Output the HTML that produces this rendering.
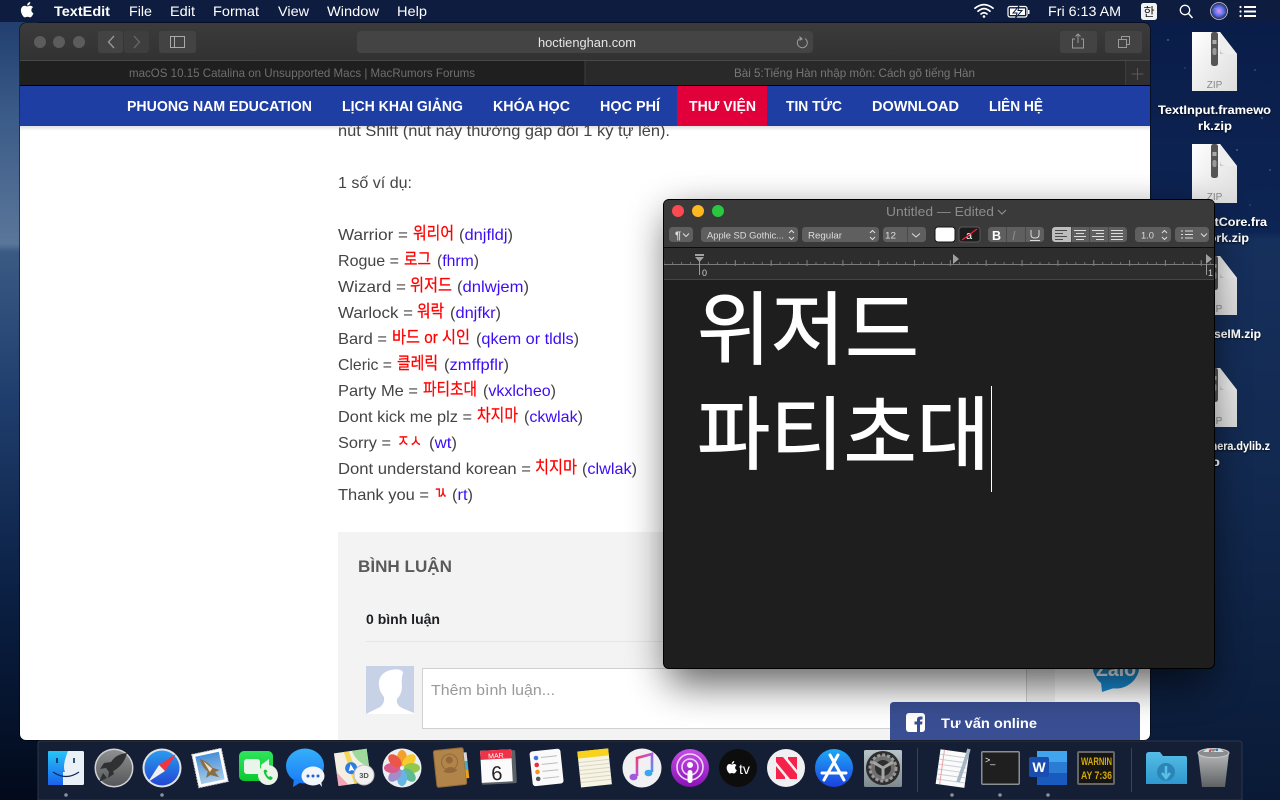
<!DOCTYPE html>
<html><head><meta charset="utf-8"><title>hoctienghan.com</title>
<style>
html,body{margin:0;padding:0;background:#0b1a35;width:1280px;height:800px;overflow:hidden}
svg{display:block}
text{font-family:"Liberation Sans","Noto Sans CJK KR",sans-serif}
.kr{font-family:"Liberation Sans","Noto Sans CJK KR",sans-serif}
.t{font-size:16px;fill:#444}
.r{font-size:17px;fill:#f00;stroke:#f00;stroke-width:.25px}
.b{font-size:16px;fill:#3d0cf5}
.d{fill:#444}
.n{font-size:15px;font-weight:bold;fill:#fff}
.m{font-size:14px;fill:#fff}
.f{font-size:12px;font-weight:bold;fill:#fff}
.tb{fill:#5f5f5f}
</style></head><body>
<svg width="1280" height="800" viewBox="0 0 1280 800" xmlns="http://www.w3.org/2000/svg">
<defs>
<linearGradient id="lf" x1="0" y1="0" x2="0" y2="1"><stop offset="0" stop-color="#1c3868"/><stop offset=".14" stop-color="#3a5a88"/><stop offset=".305" stop-color="#5a7699"/><stop offset=".315" stop-color="#3a5a84"/><stop offset=".5" stop-color="#1f3d6c"/><stop offset=".75" stop-color="#0a1f42"/><stop offset="1" stop-color="#020a1b"/></linearGradient>
<linearGradient id="rt" x1="0" y1="0" x2="0" y2="1"><stop offset="0" stop-color="#0a1c48"/><stop offset=".29" stop-color="#0d2554"/><stop offset=".3" stop-color="#16305d"/><stop offset=".6" stop-color="#12294f"/><stop offset="1" stop-color="#0a1a36"/></linearGradient>
<linearGradient id="tb" x1="0" y1="0" x2="0" y2="1"><stop offset="0" stop-color="#3b3b3b"/><stop offset="1" stop-color="#323232"/></linearGradient>
<linearGradient id="nsh" x1="0" y1="0" x2="0" y2="1"><stop offset="0" stop-color="#000" stop-opacity=".12"/><stop offset="1" stop-color="#000" stop-opacity="0"/></linearGradient>
<filter id="sh" x="-20%" y="-20%" width="140%" height="140%"><feGaussianBlur stdDeviation="20"/></filter>
<filter id="ts" x="-10%" y="-30%" width="120%" height="160%"><feDropShadow dx="0" dy="1" stdDeviation="1" flood-color="#000" flood-opacity=".8"/></filter>
<clipPath id="saf"><rect x="20" y="23" width="1130" height="717" rx="6"/></clipPath>
<linearGradient id="zipg" x1="0" y1="0" x2="1" y2="1"><stop offset="0" stop-color="#fff"/><stop offset="1" stop-color="#dcdcdc"/></linearGradient>
<linearGradient id="fin" x1="0" y1="0" x2="0" y2="1"><stop offset="0" stop-color="#26c6f6"/><stop offset="1" stop-color="#1a62ee"/></linearGradient>
<linearGradient id="gry" x1="0" y1="0" x2="0" y2="1"><stop offset="0" stop-color="#8d8f90"/><stop offset="1" stop-color="#55585a"/></linearGradient>
<linearGradient id="saf2" x1="0" y1="0" x2="0" y2="1"><stop offset="0" stop-color="#2a9bee"/><stop offset="1" stop-color="#2347d4"/></linearGradient>
<linearGradient id="ft" x1="0" y1="0" x2="0" y2="1"><stop offset="0" stop-color="#2fe45d"/><stop offset="1" stop-color="#0bc92f"/></linearGradient>
<linearGradient id="msg" x1="0" y1="0" x2="0" y2="1"><stop offset="0" stop-color="#35b0fb"/><stop offset="1" stop-color="#1b7df5"/></linearGradient>
<linearGradient id="mus" x1="0" y1="0" x2="1" y2="1"><stop offset="0" stop-color="#fb3a5c"/><stop offset=".5" stop-color="#b05ae0"/><stop offset="1" stop-color="#3aa6f0"/></linearGradient>
<linearGradient id="pod" x1="0" y1="0" x2="0" y2="1"><stop offset="0" stop-color="#c54ee6"/><stop offset="1" stop-color="#8a12b8"/></linearGradient>
<linearGradient id="aps" x1="0" y1="0" x2="0" y2="1"><stop offset="0" stop-color="#1fa8f6"/><stop offset="1" stop-color="#1b40e0"/></linearGradient>
<linearGradient id="dl" x1="0" y1="0" x2="0" y2="1"><stop offset="0" stop-color="#55bde6"/><stop offset="1" stop-color="#2f98cf"/></linearGradient>
<linearGradient id="tr" x1="0" y1="0" x2="0" y2="1"><stop offset="0" stop-color="#b5b7b8"/><stop offset="1" stop-color="#5e6163"/></linearGradient>
<linearGradient id="sp" x1="0" y1="0" x2="0" y2="1"><stop offset="0" stop-color="#b9c4cb"/><stop offset="1" stop-color="#7e8a90"/></linearGradient>
<linearGradient id="sky" x1="0" y1="0" x2="0" y2="1"><stop offset="0" stop-color="#4a8fd8"/><stop offset="1" stop-color="#a9cdea"/></linearGradient>
<radialGradient id="siri" cx=".5" cy=".5" r=".5"><stop offset="0" stop-color="#e8f"/><stop offset=".5" stop-color="#5a78f0"/><stop offset="1" stop-color="#2a2250"/></radialGradient>
<pattern id="tick" x="699" y="262" width="8.96" height="5" patternUnits="userSpaceOnUse"><rect width="1" height="3" fill="#6f6f6f"/></pattern>
<pattern id="tick2" x="699" y="260" width="35.84" height="8" patternUnits="userSpaceOnUse"><rect width="1" height="6" fill="#7d7d7d"/></pattern>
<g id="zip">
<path d="M0 0H28L45 22V59H0Z" fill="url(#zipg)"/><path d="M28 0V22H45Z" fill="#c9c9c9"/><path d="M28 0L45 22H34Q28 22 28 16Z" fill="#eee"/>
<rect x="19" y="0" width="7" height="34" rx="2.500" fill="#555"/><rect x="20.500" y="8" width="4" height="4" fill="#aaa"/><rect x="20.500" y="16" width="4" height="7" rx="2" fill="#999"/>
<text x="22.500" y="56" font-size="10" text-anchor="middle" fill="#888">ZIP</text>
</g>
</defs>

<!-- desktop -->
<rect width="1280" height="800" fill="url(#rt)"/>
<rect width="38" height="800" fill="url(#lf)"/>
<g fill="#fff" opacity=".5"><circle cx="1168" cy="40" r=".7"/><circle cx="1262" cy="118" r=".7"/><circle cx="1237" cy="150" r=".7"/><circle cx="1270" cy="170" r=".6"/><circle cx="1255" cy="70" r=".6"/><circle cx="1185" cy="68" r=".5"/><circle cx="1250" cy="205" r=".5"/></g>
<rect y="0" width="1280" height="22" fill="#0d1c3f"/>

<!-- desktop files -->
<use href="#zip" x="1192" y="32"/><use href="#zip" x="1192" y="144"/><use href="#zip" x="1192" y="256"/><use href="#zip" x="1192" y="368"/>
<g filter="url(#ts)">
<text class="f" x="1158" y="114" textLength="113" lengthAdjust="spacingAndGlyphs">TextInput.framewo</text>
<text class="f" x="1198" y="130" textLength="34" lengthAdjust="spacingAndGlyphs">rk.zip</text>
<text class="f" x="1163" y="226" textLength="104" lengthAdjust="spacingAndGlyphs">TextInputCore.fra</text>
<text class="f" x="1181" y="242" textLength="68" lengthAdjust="spacingAndGlyphs">mework.zip</text>
<text class="f" x="1169" y="338" textLength="92" lengthAdjust="spacingAndGlyphs">InputBaseIM.zip</text>
<text class="f" x="1159" y="450" textLength="111" lengthAdjust="spacingAndGlyphs">libRawCamera.dylib.z</text>
<text class="f" x="1207" y="466" textLength="13" lengthAdjust="spacingAndGlyphs">ip</text>
</g>

<!-- menu bar -->
<path fill="#fff" transform="translate(19.500,2) scale(.64)" d="M12.152 6.896c-.948 0-2.415-1.078-3.96-1.04-2.04.027-3.91 1.183-4.961 3.014-2.117 3.675-.546 9.103 1.519 12.09 1.013 1.454 2.208 3.09 3.792 3.039 1.52-.065 2.09-.987 3.935-.987 1.831 0 2.35.987 3.96.948 1.637-.026 2.676-1.48 3.676-2.948 1.156-1.688 1.636-3.325 1.662-3.415-.039-.013-3.182-1.221-3.22-4.857-.026-3.04 2.48-4.494 2.597-4.559-1.429-2.09-3.623-2.324-4.39-2.376-2-.156-3.675 1.09-4.61 1.09zM15.53 3.83c.843-1.012 1.4-2.427 1.245-3.83-1.207.052-2.662.805-3.532 1.818-.78.896-1.454 2.338-1.273 3.714 1.338.104 2.715-.688 3.559-1.701"/>
<text class="m" x="54" y="16" font-weight="bold" textLength="56" lengthAdjust="spacingAndGlyphs">TextEdit</text>
<text class="m" x="129" y="16" textLength="23" lengthAdjust="spacingAndGlyphs">File</text>
<text class="m" x="170" y="16" textLength="25" lengthAdjust="spacingAndGlyphs">Edit</text>
<text class="m" x="213" y="16" textLength="46" lengthAdjust="spacingAndGlyphs">Format</text>
<text class="m" x="278" y="16" textLength="31" lengthAdjust="spacingAndGlyphs">View</text>
<text class="m" x="327" y="16" textLength="52" lengthAdjust="spacingAndGlyphs">Window</text>
<text class="m" x="397" y="16" textLength="30" lengthAdjust="spacingAndGlyphs">Help</text>
<g fill="none" stroke="#fff" stroke-width="1.700" stroke-linecap="round"><path d="M975 8.200Q984 1 993 8.200"/><path d="M978 11.200Q984 6 990 11.200"/><path d="M981 14Q984 11.500 987 14"/></g><circle cx="984" cy="16.500" r="1.300" fill="#fff"/>
<rect x="1008" y="6.500" width="19" height="10.500" rx="2" fill="none" stroke="#fff" stroke-width="1.200"/><rect x="1028" y="10" width="1.500" height="4" fill="#fff"/><rect x="1010" y="8.500" width="15" height="6.500" fill="#fff"/><path d="M1019 6L1013 13H1017L1015.500 18L1022 10.500H1018Z" fill="#fff" stroke="#0d1c3f" stroke-width="1"/>
<text class="m" x="1048" y="16" textLength="73" lengthAdjust="spacingAndGlyphs">Fri 6:13 AM</text>
<rect x="1141" y="3" width="16" height="17" rx="2.500" fill="#f2f2f2"/><text x="1149" y="16" font-size="12" fill="#111" text-anchor="middle" class="kr">한</text>
<circle cx="1185" cy="10" r="4.700" fill="none" stroke="#fff" stroke-width="1.300"/><path d="M1188.500 13.500L1192.500 18" stroke="#fff" stroke-width="1.500"/>
<circle cx="1219" cy="11" r="8.500" fill="url(#siri)" stroke="#ccc" stroke-width=".8"/><path d="M1212 11Q1215 6 1219 11T1226 11Q1222 16 1219 11T1212 11" fill="#fff" opacity=".75"/>
<g fill="#fff"><circle cx="1240.500" cy="7" r="1.100"/><circle cx="1240.500" cy="11.500" r="1.100"/><circle cx="1240.500" cy="16" r="1.100"/><rect x="1244" y="6" width="12" height="2"/><rect x="1244" y="10.500" width="12" height="2"/><rect x="1244" y="15" width="12" height="2"/></g>

<!-- Safari -->
<rect x="19.500" y="22.500" width="1131" height="718" rx="6.500" fill="#000"/>
<g clip-path="url(#saf)">
<rect x="20" y="23" width="1130" height="37" fill="url(#tb)"/>
<rect x="20" y="60" width="1130" height="1" fill="#484848"/>
<rect x="20" y="61" width="565" height="24" fill="#1f1f1f"/>
<rect x="585" y="61" width="540" height="24" fill="#292929"/>
<rect x="1125" y="61" width="25" height="24" fill="#2f2f2f"/>
<rect x="584.500" y="61" width="1" height="24" fill="#3d3d3d"/><rect x="1125" y="61" width="1" height="24" fill="#3d3d3d"/>
<rect x="20" y="85" width="1130" height="1" fill="#000"/>
<g fill="#5c5c5c"><circle cx="40" cy="42" r="6"/><circle cx="59" cy="42" r="6"/><circle cx="79" cy="42" r="6"/></g>
<rect x="98" y="31" width="25" height="22" rx="3" fill="#434343"/><rect x="124" y="31" width="25" height="22" rx="3" fill="#3e3e3e"/>
<path d="M114 36L108.500 42L114 48" fill="none" stroke="#9a9a9a" stroke-width="1.300"/><path d="M134 36L139.500 42L134 48" fill="none" stroke="#666" stroke-width="1.300"/>
<rect x="159" y="31" width="37" height="22" rx="3" fill="#434343"/><rect x="170.500" y="36.500" width="14" height="11" fill="none" stroke="#aaa"/><rect x="174" y="37" width="1" height="10" fill="#aaa"/>
<rect x="357" y="31" width="456" height="22" rx="4" fill="#444"/>
<text x="538" y="47" font-size="12.500" fill="#e6e6e6" textLength="98" lengthAdjust="spacingAndGlyphs">hoctienghan.com</text>
<path d="M805 38.500A5 5 0 1 1 799 39" fill="none" stroke="#999" stroke-width="1"/><path d="M799.500 36L803 39L799.500 41Z" fill="#999"/>
<rect x="1060" y="31" width="37" height="22" rx="3" fill="#434343"/><path d="M1075 39H1072.500V48H1083.500V39H1081M1078 43V34M1075.500 36.500L1078 34L1080.500 36.500" fill="none" stroke="#9a9a9a"/>
<rect x="1105" y="31" width="37" height="22" rx="3" fill="#434343"/><rect x="1118.500" y="39.500" width="8" height="8" fill="none" stroke="#9a9a9a"/><path d="M1121.500 39V36.500H1129.500V44.500H1127" fill="none" stroke="#9a9a9a"/>
<text x="129" y="77" font-size="12" fill="#6f6f6f" textLength="346" lengthAdjust="spacingAndGlyphs">macOS 10.15 Catalina on Unsupported Macs | MacRumors Forums</text>
<text x="734" y="77" font-size="12" fill="#777" textLength="241" lengthAdjust="spacingAndGlyphs">Bài 5:Tiếng Hàn nhập môn: Cách gõ tiếng Hàn</text>
<path d="M1137.500 68V80M1131.500 74H1143.500" stroke="#5a5a5a"/>

<!-- page -->
<rect x="20" y="86" width="1130" height="660" fill="#fff"/>
<text class="t" x="338" y="136" textLength="332" lengthAdjust="spacingAndGlyphs">nút Shift (nút này thường gấp đôi 1 ký tự lên).</text>
<rect x="20" y="126" width="1130" height="5" fill="url(#nsh)"/>
<rect x="20" y="86" width="1130" height="40" fill="#1f3ea3"/>
<rect x="677" y="86" width="90" height="40" fill="#e2003a"/>
<text class="n" x="127" y="111" textLength="185" lengthAdjust="spacingAndGlyphs">PHUONG NAM EDUCATION</text>
<text class="n" x="342" y="111" textLength="121" lengthAdjust="spacingAndGlyphs">LỊCH KHAI GIẢNG</text>
<text class="n" x="493" y="111" textLength="77" lengthAdjust="spacingAndGlyphs">KHÓA HỌC</text>
<text class="n" x="600" y="111" textLength="60" lengthAdjust="spacingAndGlyphs">HỌC PHÍ</text>
<text class="n" x="689" y="111" textLength="67" lengthAdjust="spacingAndGlyphs">THƯ VIỆN</text>
<text class="n" x="786" y="111" textLength="56" lengthAdjust="spacingAndGlyphs">TIN TỨC</text>
<text class="n" x="872" y="111" textLength="87" lengthAdjust="spacingAndGlyphs">DOWNLOAD</text>
<text class="n" x="989" y="111" textLength="54" lengthAdjust="spacingAndGlyphs">LIÊN HỆ</text>

<text class="t" x="338" y="188" textLength="74" lengthAdjust="spacingAndGlyphs">1 số ví dụ:</text>

<text class="t" x="338" y="240" textLength="70" lengthAdjust="spacingAndGlyphs">Warrior =</text><text class="r" x="413" y="239" textLength="41" lengthAdjust="spacingAndGlyphs">워리어</text><text class="b" x="459" y="240" textLength="54" lengthAdjust="spacingAndGlyphs"><tspan class="d">(</tspan>dnjfldj<tspan class="d">)</tspan></text>
<text class="t" x="338" y="266" textLength="61" lengthAdjust="spacingAndGlyphs">Rogue =</text><text class="r" x="404" y="265" textLength="27" lengthAdjust="spacingAndGlyphs">로그</text><text class="b" x="437" y="266" textLength="42" lengthAdjust="spacingAndGlyphs"><tspan class="d">(</tspan>fhrm<tspan class="d">)</tspan></text>
<text class="t" x="338" y="292" textLength="68" lengthAdjust="spacingAndGlyphs">Wizard =</text><text class="r" x="410" y="291" textLength="42" lengthAdjust="spacingAndGlyphs">위저드</text><text class="b" x="457" y="292" textLength="72" lengthAdjust="spacingAndGlyphs"><tspan class="d">(</tspan>dnlwjem<tspan class="d">)</tspan></text>
<text class="t" x="338" y="318" textLength="75" lengthAdjust="spacingAndGlyphs">Warlock =</text><text class="r" x="417" y="317" textLength="27" lengthAdjust="spacingAndGlyphs">워락</text><text class="b" x="450" y="318" textLength="51" lengthAdjust="spacingAndGlyphs"><tspan class="d">(</tspan>dnjfkr<tspan class="d">)</tspan></text>
<text class="t" x="338" y="344" textLength="49" lengthAdjust="spacingAndGlyphs">Bard =</text><text class="r" x="392" y="343" textLength="78" lengthAdjust="spacingAndGlyphs">바드 or 시인</text><text class="b" x="476" y="344" textLength="103" lengthAdjust="spacingAndGlyphs"><tspan class="d">(</tspan>qkem or tldls<tspan class="d">)</tspan></text>
<text class="t" x="338" y="370" textLength="54" lengthAdjust="spacingAndGlyphs">Cleric =</text><text class="r" x="397" y="369" textLength="41" lengthAdjust="spacingAndGlyphs">클레릭</text><text class="b" x="444" y="370" textLength="65" lengthAdjust="spacingAndGlyphs"><tspan class="d">(</tspan>zmffpflr<tspan class="d">)</tspan></text>
<text class="t" x="338" y="396" textLength="80" lengthAdjust="spacingAndGlyphs">Party Me =</text><text class="r" x="423" y="395" textLength="54" lengthAdjust="spacingAndGlyphs">파티초대</text><text class="b" x="483" y="396" textLength="73" lengthAdjust="spacingAndGlyphs"><tspan class="d">(</tspan>vkxlcheo<tspan class="d">)</tspan></text>
<text class="t" x="338" y="422" textLength="134" lengthAdjust="spacingAndGlyphs">Dont kick me plz =</text><text class="r" x="477" y="421" textLength="41" lengthAdjust="spacingAndGlyphs">차지마</text><text class="b" x="524" y="422" textLength="59" lengthAdjust="spacingAndGlyphs"><tspan class="d">(</tspan>ckwlak<tspan class="d">)</tspan></text>
<text class="t" x="338" y="448" textLength="53" lengthAdjust="spacingAndGlyphs">Sorry =</text><text class="r" x="397" y="447" textLength="25" lengthAdjust="spacingAndGlyphs">ㅈㅅ</text><text class="b" x="429" y="448" textLength="28" lengthAdjust="spacingAndGlyphs"><tspan class="d">(</tspan>wt<tspan class="d">)</tspan></text>
<text class="t" x="338" y="474" textLength="193" lengthAdjust="spacingAndGlyphs">Dont understand korean =</text><text class="r" x="535" y="473" textLength="42" lengthAdjust="spacingAndGlyphs">치지마</text><text class="b" x="582" y="474" textLength="55" lengthAdjust="spacingAndGlyphs"><tspan class="d">(</tspan>clwlak<tspan class="d">)</tspan></text>
<text class="t" x="338" y="500" textLength="91" lengthAdjust="spacingAndGlyphs">Thank you =</text><text class="r" x="434" y="499" textLength="13" lengthAdjust="spacingAndGlyphs">ㄳ</text><text class="b" x="452" y="500" textLength="21" lengthAdjust="spacingAndGlyphs"><tspan class="d">(</tspan>rt<tspan class="d">)</tspan></text>

<rect x="338" y="532" width="717" height="210" fill="#f3f3f3"/>
<text x="358" y="572" font-size="17" font-weight="bold" fill="#5a5a5a" textLength="94" lengthAdjust="spacingAndGlyphs">BÌNH LUẬN</text>
<text x="366" y="624" font-size="14" font-weight="bold" fill="#1c1e21" textLength="74" lengthAdjust="spacingAndGlyphs">0 bình luận</text>
<rect x="366" y="641" width="661" height="1" fill="#e3e5e8"/>
<rect x="366" y="666" width="48" height="48" fill="#c8d2e6"/>
<path d="M366 714L378 708Q385 705 384 697Q378 690 379 681Q381 672 391 670Q400 668 403 672Q401 680 402 686Q402 694 397 699Q396 705 402 708L414 713V714Z" fill="#fff"/>
<rect x="422.500" y="668.500" width="604" height="60" fill="#fff" stroke="#d0d0d0"/>
<text x="431" y="695" font-size="15" fill="#9a9a9a" textLength="124" lengthAdjust="spacingAndGlyphs">Thêm bình luận...</text>

<circle cx="1116" cy="665" r="23.500" fill="#1a8fd8"/><path d="M1101 682L1102 692L1114 688Z" fill="#1a8fd8"/>
<text x="1116" y="676" font-size="20" font-weight="bold" fill="#fff" text-anchor="middle" textLength="40" lengthAdjust="spacingAndGlyphs">Zalo</text>
<path d="M890 742V706Q890 702 894 702H1136Q1140 702 1140 706V742Z" fill="#3a4f93"/>
<rect x="906" y="713" width="19" height="19" rx="3" fill="#fff"/>
<path d="M917 732V724.500H914.500V721.500H917V719.500Q917 716.500 920.500 716.500H922.500V719.500H921Q920 719.500 920 720.500V721.500H922.500L922 724.500H920V732Z" fill="#3a4f93"/>
<text x="941" y="728" font-size="14" font-weight="bold" fill="#fff" textLength="96" lengthAdjust="spacingAndGlyphs">Tư vấn online</text>
</g>

<!-- TextEdit shadow -->
<rect x="668" y="214" width="542" height="470" rx="8" fill="#000" opacity=".62" filter="url(#sh)"/>

<!-- TextEdit -->
<rect x="663" y="199" width="552" height="470" rx="6" fill="#000"/>
<rect x="664" y="200" width="550" height="468" rx="5" fill="#1e1e1e"/>
<path d="M664 247V205Q664 200 669 200H1209Q1214 200 1214 205V247Z" fill="#3a3a3a"/>
<rect x="664" y="247" width="550" height="1" fill="#0c0c0c"/>
<rect x="664" y="248" width="550" height="31" fill="#2d2d2d"/>
<rect x="664" y="279" width="550" height="1" fill="#454545"/>
<circle cx="678" cy="211" r="6" fill="#fc4a50"/><circle cx="698" cy="211" r="6" fill="#fdb91f"/><circle cx="718" cy="211" r="6" fill="#28c93f"/>
<text x="886" y="216" font-size="12.500" fill="#8c8c8c" textLength="108" lengthAdjust="spacingAndGlyphs">Untitled — Edited</text><path d="M998 210L1002 214L1006 210" fill="none" stroke="#8c8c8c" stroke-width="1.200"/>
<g class="tb">
<rect x="669" y="227" width="24" height="15" rx="3.500"/><rect x="701" y="227" width="97" height="15" rx="3.500"/><rect x="802" y="227" width="77" height="15" rx="3.500"/><rect x="883" y="227" width="43" height="15" rx="3.500"/>
<rect x="988" y="227" width="56" height="15" rx="3.500"/><rect x="1052" y="227" width="75" height="15" rx="3.500"/><rect x="1135" y="227" width="36" height="15" rx="3.500"/><rect x="1175" y="227" width="34" height="15" rx="3.500"/>
</g>
<rect x="907" y="227" width="1" height="15" fill="#4a4a4a"/>
<rect x="1006" y="227" width="1" height="15" fill="#4a4a4a"/><rect x="1025" y="227" width="1" height="15" fill="#4a4a4a"/>
<path d="M1052 230.500Q1052 227 1055.500 227H1071V242H1055.500Q1052 242 1052 238.500Z" fill="#bdbdbd"/>
<rect x="1071" y="227" width="1" height="15" fill="#4a4a4a"/><rect x="1089" y="227" width="1" height="15" fill="#4a4a4a"/><rect x="1108" y="227" width="1" height="15" fill="#4a4a4a"/>
<g fill="#e2e2e2" font-size="9.500">
<text x="675" y="239" font-size="11" font-weight="bold" fill="#ddd">¶</text>
<text x="707" y="238.500" fill="#ddd" textLength="77" lengthAdjust="spacingAndGlyphs">Apple SD Gothic...</text>
<text x="808" y="238.500" fill="#ddd" textLength="34" lengthAdjust="spacingAndGlyphs">Regular</text>
<text x="885" y="238.500" fill="#ddd" textLength="11" lengthAdjust="spacingAndGlyphs">12</text>
<text x="1141" y="238.500" fill="#ddd" textLength="13" lengthAdjust="spacingAndGlyphs">1.0</text>
</g>
<g fill="none" stroke="#ddd" stroke-width="1">
<path d="M683 233.500L686 236.500L689 233.500"/><path d="M912 233.500L916 237L920 233.500"/><path d="M1201 233.500L1204 236.500L1207 233.500"/>
<path d="M789 233L791.500 230.500L794 233M789 237L791.500 239.500L794 237"/><path d="M870 233L872.500 230.500L875 233M870 237L872.500 239.500L875 237"/><path d="M1162 233L1164.500 230.500L1167 233M1162 237L1164.500 239.500L1167 237"/>
<path d="M1181 231H1183M1181 234.500H1183M1181 238H1183M1185 231H1193M1185 234.500H1193M1185 238H1193"/>
<path d="M1074 230.500H1086M1076 233.500H1084M1074 236.500H1086M1076 239.500H1084"/>
<path d="M1092 230.500H1104M1096 233.500H1104M1092 236.500H1104M1096 239.500H1104"/>
<path d="M1111 230.500H1123M1111 233.500H1123M1111 236.500H1123M1111 239.500H1123"/>
<path d="M1031 230V235Q1031 238 1035 238T1039 235V230M1030 240.500H1040"/>
</g>
<g stroke="#4b4b4b" fill="none"><path d="M1055 230.500H1067M1055 233.500H1063M1055 236.500H1067M1055 239.500H1063"/></g>
<text x="992" y="240" font-size="12.500" font-weight="bold" fill="#fff">B</text>
<text x="1012" y="240" font-size="12.500" font-style="italic" fill="#8a8a8a">I</text>
<rect x="935" y="227" width="20" height="15" rx="3" fill="#fff" stroke="#151515"/>
<rect x="959" y="227" width="21" height="15" rx="3" fill="#1c1c1c" stroke="#5a5a5a"/>
<text x="966" y="239" font-size="11" fill="#fff">a</text><path d="M962 240L977 229" stroke="#f0203a" stroke-width="1.200"/>

<!-- ruler -->
<rect x="664" y="262" width="550" height="5" fill="url(#tick)"/>
<rect x="664" y="260" width="550" height="8" fill="url(#tick2)"/>
<rect x="664" y="264" width="550" height="1" fill="#7a7a7a"/>
<path d="M695 254H704V256H695ZM695 257H704L699.500 262Z" fill="#a0a0a0"/><rect x="699" y="262" width="1" height="13" fill="#9a9a9a"/>
<path d="M953 254L959 259L953 264Z" fill="#a0a0a0"/><path d="M1206 254L1212 259L1206 264Z" fill="#a0a0a0"/><rect x="1206" y="264" width="1" height="11" fill="#9a9a9a"/>
<text x="702" y="276" font-size="9" fill="#d0d0d0">0</text><text x="1208" y="276" font-size="9" fill="#d0d0d0">1</text>

<text x="697" y="358" font-size="80" fill="#fff" stroke="#fff" stroke-width=".9" textLength="222" lengthAdjust="spacingAndGlyphs" class="kr">위저드</text>
<text x="697" y="463" font-size="80" fill="#fff" stroke="#fff" stroke-width=".9" textLength="293" lengthAdjust="spacingAndGlyphs" class="kr">파티초대</text>
<rect x="991" y="386" width="1" height="106" fill="#fff"/>

<!-- Dock -->
<path d="M38 800V744Q38 741 41 741H1239Q1242 741 1242 744V800Z" fill="#141f35" stroke="#2c3649"/>
<rect x="917" y="748" width="1" height="44" fill="#3a4356"/><rect x="1131" y="748" width="1" height="44" fill="#3a4356"/>
<g fill="#8a8f98"><circle cx="66" cy="795" r="1.800"/><circle cx="162" cy="795" r="1.800"/><circle cx="952" cy="795" r="1.800"/><circle cx="1000" cy="795" r="1.800"/><circle cx="1048" cy="795" r="1.800"/></g>

<!-- finder -->
<rect x="48" y="751" width="36" height="34" rx="1.500" fill="#e9f0f6"/>
<path d="M49.500 751H68Q62 766 65 772H63V785H49.500Q48 785 48 783.500V752.500Q48 751 49.500 751Z" fill="url(#fin)"/>
<path d="M57 758V763M74 758V763" stroke="#0e2a55" stroke-width="1.600"/><path d="M53 772Q66 781 79 772" fill="none" stroke="#0e2a55" stroke-width="1.200"/>
<!-- launchpad -->
<circle cx="114" cy="768" r="19.500" fill="#d0d2d3"/><circle cx="114" cy="768" r="18" fill="url(#gry)"/>
<path d="M127 753Q116 754 111 762L104 763L100 769L106 768L109 772L108 778L114 774L113 771L113.500 771Q124 765 127 753ZM103 773L99 782L107 778Z" fill="#2f3133"/>
<!-- safari -->
<circle cx="162" cy="768" r="19.500" fill="#dfe3e8"/><circle cx="162" cy="768" r="17.500" fill="url(#saf2)"/>
<path d="M176 754L159 765L165 771Z" fill="#f5333f"/><path d="M148 782L159 765L165 771Z" fill="#f0f0f0"/>
<!-- mail -->
<g transform="rotate(-12 210 768)"><rect x="195" y="751" width="30" height="34" fill="#fff" stroke="#ccc" stroke-dasharray="2 1"/><rect x="198" y="754" width="24" height="28" fill="url(#sky)"/><path d="M202 757Q210 762 212 768L219 772L214 773L217 779L209 775L204 777L207 771Q202 765 202 757Z" fill="#8a6d45"/><path d="M205 760L212 769L209 772Z" fill="#e8e0cc"/></g>
<!-- facetime -->
<rect x="239" y="751" width="34" height="30" rx="5" fill="url(#ft)"/><rect x="244" y="759" width="16" height="15" rx="3" fill="#e9f5ea"/><path d="M261 765L269 759V775L261 770Z" fill="#e9f5ea"/>
<circle cx="268" cy="775" r="10" fill="#eaf5e8"/><path d="M264 770Q263 772 265.500 776T271 780L273 778L270.500 776L269 777Q267 775.500 266 773L267.500 771.500L266 769.500Z" fill="#19c23e"/>
<!-- messages -->
<ellipse cx="305" cy="766" rx="19" ry="17.500" fill="url(#msg)"/><path d="M294 778L293 787L303 781Z" fill="#1b7df5"/>
<ellipse cx="313" cy="776" rx="11.500" ry="9.500" fill="#f2f6fa"/><path d="M318 782L322 787L321 780Z" fill="#f2f6fa"/>
<g fill="#1f66c9"><circle cx="308" cy="776" r="1.500"/><circle cx="313" cy="776" r="1.500"/><circle cx="318" cy="776" r="1.500"/></g>
<!-- maps -->
<g transform="rotate(-8 352 767)"><rect x="336" y="751" width="33" height="33" fill="#f3efe2"/><path d="M354 751H369V768Q358 765 354 751Z" fill="#9ed89a"/><path d="M346 751L352 784H358L351 751Z" fill="#f5d65a"/><path d="M336 770L346 784H336Z" fill="#f3a6b5"/><circle cx="351" cy="768" r="6" fill="#2a7de1"/><path d="M351 764L354 771L351 770L348 771Z" fill="#fff"/></g>
<circle cx="364" cy="775" r="10" fill="#f1f1f1" stroke="#bbb"/><text x="364" y="778" font-size="7.500" text-anchor="middle" fill="#555" font-weight="bold">3D</text>
<!-- photos -->
<circle cx="402" cy="768" r="19.500" fill="#eceff1"/>
<g transform="translate(402 768)" opacity=".92">
<ellipse cy="-10" rx="5" ry="8" fill="#f59a1d"/><ellipse cy="-10" rx="5" ry="8" fill="#f7c81e" transform="rotate(45)"/><ellipse cy="-10" rx="5" ry="8" fill="#8cc63e" transform="rotate(90)"/><ellipse cy="-10" rx="5" ry="8" fill="#54b58a" transform="rotate(135)"/><ellipse cy="-10" rx="5" ry="8" fill="#5bb1e4" transform="rotate(180)"/><ellipse cy="-10" rx="5" ry="8" fill="#9a86c8" transform="rotate(225)"/><ellipse cy="-10" rx="5" ry="8" fill="#d94f83" transform="rotate(270)"/><ellipse cy="-10" rx="5" ry="8" fill="#ea4a3a" transform="rotate(315)"/>
</g>
<!-- contacts -->
<g transform="rotate(-6 450 767)"><rect x="435" y="749" width="30" height="37" rx="2" fill="#b1844a" stroke="#8e6838"/><rect x="465" y="754" width="3" height="9" fill="#d9d9d9"/><rect x="465" y="763" width="3" height="8" fill="#3fb0c8"/><rect x="465" y="771" width="3" height="9" fill="#e8a01e"/><circle cx="450" cy="762" r="8" fill="none" stroke="#93693a"/><circle cx="450" cy="760" r="3.500" fill="#93693a"/><path d="M443 771Q450 763 457 771Q450 775 443 771Z" fill="#93693a"/></g>
<!-- calendar -->
<g transform="rotate(-3 498 767)"><rect x="481" y="751" width="35" height="33" rx="1.500" fill="#5a6268"/><rect x="481" y="750" width="31" height="32" fill="#fbfbfb"/><rect x="481" y="750" width="31" height="9" fill="#ee3348"/><text x="496.500" y="758" font-size="7" text-anchor="middle" fill="#fff">MAR</text><text x="496.500" y="780" font-size="20" text-anchor="middle" fill="#222">6</text></g>
<!-- reminders -->
<g transform="rotate(-6 546 767)"><rect x="531" y="750" width="31" height="35" rx="3" fill="#fafafa"/><circle cx="537" cy="757" r="2.300" fill="#3f72e8"/><circle cx="537" cy="764" r="2.300" fill="#ee2e30"/><circle cx="537" cy="771" r="2.300" fill="#f2951c"/><circle cx="537" cy="778" r="2.300" fill="#555"/><path d="M542 757H558M542 764H558M542 771H558M542 778H558" stroke="#bbb"/></g>
<!-- notes -->
<g transform="rotate(-6 594 767)"><rect x="579" y="750" width="31" height="36" fill="#f7f4e4"/><rect x="579" y="750" width="31" height="7" fill="#f8d21d"/><path d="M579 761H610M579 765H610M579 769H610M579 773H610M579 777H610M579 781H610" stroke="#d8d5c6"/></g>
<!-- music -->
<circle cx="642" cy="768" r="19.500" fill="#f1f1f3"/><path d="M637 776V758L652 754V772" fill="none" stroke="url(#mus)" stroke-width="2.600"/><ellipse cx="633.500" cy="777" rx="4" ry="3.300" fill="#a05ae0"/><ellipse cx="648.500" cy="773" rx="4" ry="3.300" fill="#3aa6f0"/>
<!-- podcasts -->
<circle cx="690" cy="768" r="19" fill="url(#pod)"/><circle cx="690" cy="767" r="13" fill="none" stroke="#f0d4f8" stroke-width="1.600"/><circle cx="690" cy="767" r="8" fill="none" stroke="#f0d4f8" stroke-width="1.600"/><circle cx="690" cy="765" r="3" fill="#fff"/><rect x="687.500" y="770" width="5" height="13" rx="2.500" fill="#fff"/>
<!-- tv -->
<circle cx="738" cy="768" r="19" fill="#0d0d0d"/><path fill="#fff" transform="translate(725.500,761) scale(.52)" d="M12.152 6.896c-.948 0-2.415-1.078-3.96-1.04-2.04.027-3.91 1.183-4.961 3.014-2.117 3.675-.546 9.103 1.519 12.09 1.013 1.454 2.208 3.09 3.792 3.039 1.52-.065 2.09-.987 3.935-.987 1.831 0 2.35.987 3.96.948 1.637-.026 2.676-1.48 3.676-2.948 1.156-1.688 1.636-3.325 1.662-3.415-.039-.013-3.182-1.221-3.22-4.857-.026-3.04 2.48-4.494 2.597-4.559-1.429-2.09-3.623-2.324-4.39-2.376-2-.156-3.675 1.09-4.61 1.09zM15.53 3.83c.843-1.012 1.4-2.427 1.245-3.83-1.207.052-2.662.805-3.532 1.818-.78.896-1.454 2.338-1.273 3.714 1.338.104 2.715-.688 3.559-1.701"/><text x="739" y="774" font-size="14" fill="#fff">tv</text>
<!-- news -->
<circle cx="786" cy="768" r="19" fill="#f0f0f2"/><path d="M776 757H783L797 774V779H790L776 762ZM776 766L785 777V779H776ZM788 757H797V770L788 759Z" fill="#f5234c"/>
<!-- app store -->
<circle cx="834" cy="768" r="19" fill="url(#aps)"/><path d="M838 755L824 780M830 755L844 780M822 773H846" stroke="#fff" stroke-width="3" stroke-linecap="round"/>
<!-- system prefs -->
<rect x="864" y="750" width="38" height="37" rx="1.500" fill="url(#sp)"/><circle cx="883" cy="768" r="17" fill="#2e2e2e"/><circle cx="883" cy="768" r="13" fill="#6f6f6f" stroke="#999" stroke-dasharray="3 2" stroke-width="3"/><circle cx="883" cy="768" r="8" fill="#2e2e2e"/><path d="M883 768V779M883 768L873 762M883 768L893 762" stroke="#a5a5a5" stroke-width="3"/>
<!-- textedit -->
<g transform="rotate(8 952 768)"><rect x="938" y="751" width="29" height="35" fill="#fbfbfb"/><path d="M938 756H967M938 761H967M938 766H967M938 771H967M938 776H967M938 781H967" stroke="#c9cfd6"/><path d="M942 751V786" stroke="#f0a0a0"/></g>
<path d="M969 749L964 765L958 782" stroke="#a6b6c4" stroke-width="3.500" fill="none"/>
<!-- terminal -->
<rect x="981" y="751" width="39" height="34" rx="2" fill="#8a8f94"/><rect x="982.500" y="752.500" width="36" height="31" fill="#1f1f1f"/><text x="985" y="763" font-size="9" fill="#fff" font-family="Liberation Mono">&gt;_</text>
<!-- word -->
<rect x="1037" y="751" width="30" height="34" rx="2" fill="#2b7cd3"/><rect x="1037" y="751" width="30" height="11" fill="#41a5ee"/><rect x="1037" y="773" width="30" height="12" fill="#185abd"/><rect x="1029" y="757" width="20" height="20" rx="2" fill="#1a4db0"/><text x="1039" y="772" font-size="14" font-weight="bold" fill="#fff" text-anchor="middle">W</text>
<!-- console -->
<rect x="1077" y="751" width="38" height="34" rx="2" fill="#666"/><rect x="1079" y="753" width="34" height="30" fill="#151515"/><text x="1081" y="765" font-size="11" font-weight="bold" fill="#d4a90a" textLength="31" lengthAdjust="spacingAndGlyphs">WARNIN</text><text x="1081" y="779" font-size="11" font-weight="bold" fill="#d4a90a" textLength="31" lengthAdjust="spacingAndGlyphs">AY 7:36</text>
<!-- downloads -->
<path d="M1146 755Q1146 752 1149 752H1160L1163 756H1185Q1187 756 1187 758V784H1146Z" fill="url(#dl)"/><circle cx="1166" cy="772" r="9" fill="#2b86b8"/><path d="M1166 766V776M1162 773L1166 778L1170 773" stroke="#5cc0e6" stroke-width="2.500" fill="none"/>
<!-- trash -->
<path d="M1198 753H1229L1225 787H1202Z" fill="url(#tr)"/><ellipse cx="1213.500" cy="753" rx="15.500" ry="4.500" fill="#8a8d8f" stroke="#ccc"/><path d="M1203 752L1208 748L1213 752L1219 748L1224 752" fill="#ddd"/><circle cx="1210" cy="751" r="1.200" fill="#d44"/><circle cx="1217" cy="750" r="1.200" fill="#37b"/>
</svg>
</body></html>
